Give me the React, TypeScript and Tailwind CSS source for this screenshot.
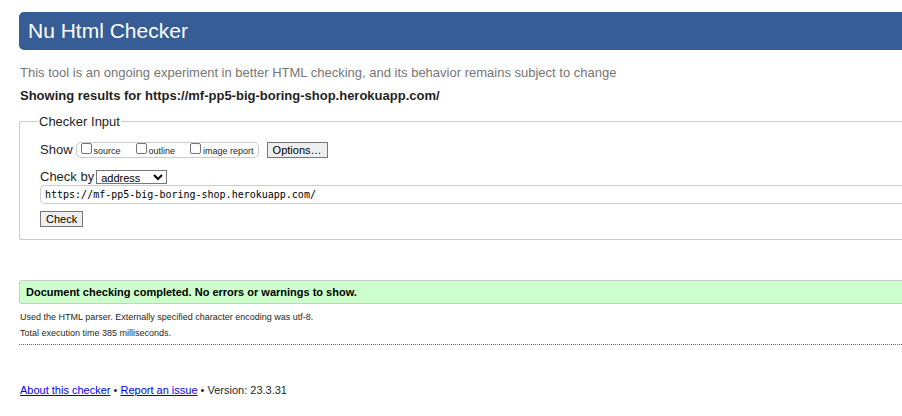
const reports = [
  { id: "source", label: "source", spacing: "mr-[15px]" },
  { id: "outline", label: "outline", spacing: "mr-[15px]" },
  { id: "image-report", label: "image report", spacing: "mr-1" },
];

const buttonStyle =
  "h-4 border border-[#767676] bg-[#efefef] px-[5px] text-[11px] leading-[14px] text-black";

function CheckerForm() {
  return (
    <form onSubmit={(event) => event.preventDefault()}>
      <fieldset className="rounded-l-[3px] border border-r-0 border-[#ccc] pb-3 pl-5">
        <legend className="-ml-0.5 px-px pt-px text-[13px] leading-4">Checker Input</legend>

        <div className="mt-3 flex items-center">
          <span id="show-label" className="mr-[3px] text-[13px] leading-4">
            Show
          </span>
          <div
            role="group"
            aria-labelledby="show-label"
            className="mr-2 flex h-4 items-center rounded-[5px] border border-[#ccc] pl-1"
          >
            {reports.map((report) => (
              <label
                key={report.id}
                htmlFor={report.id}
                className={`flex items-end gap-0.5 text-[9px] leading-3 ${report.spacing}`}
              >
                <input
                  id={report.id}
                  type="checkbox"
                  className="mb-[3px] h-[11px] w-[11px] appearance-none rounded-[2px] border border-[#767676] bg-white checked:bg-[#0075ff]"
                />
                {report.label}
              </label>
            ))}
          </div>
          <button type="button" className={buttonStyle}>
            Options…
          </button>
        </div>

        <div className="mt-[11px] flex items-center gap-0.5">
          <label htmlFor="method" className="text-[13px] leading-4">
            Check by
          </label>
          <select
            id="method"
            className="h-[14px] w-[71px] border border-[#767676] bg-white text-[11px] leading-3 text-black"
          >
            <option>address</option>
            <option>file upload</option>
            <option>text input</option>
          </select>
        </div>

        <input
          type="url"
          aria-label="Address"
          defaultValue="https://mf-pp5-big-boring-shop.herokuapp.com/"
          className="block h-[19px] w-full rounded-l-[5px] border border-r-0 border-[#ccc] pl-1 font-['DejaVu_Sans_Mono',monospace] text-[10px] text-black"
        />
        <button type="submit" className={`mt-[7px] block ${buttonStyle}`}>
          Check
        </button>
      </fieldset>
    </form>
  );
}

export default function App() {
  return (
    <div className="bg-white pt-3 pb-4 pl-[19px] font-['Liberation_Sans',Arial,sans-serif] text-[#1f1f1f]">
      <header className="rounded-l-[5px] bg-[#365d95] px-[9px] py-[5px]">
        <h1 className="text-[21px] leading-7 text-white">Nu Html Checker</h1>
      </header>

      <main>
        <p className="mt-[15px] pl-px text-[13px] leading-4 text-[#767676]">
          This tool is an ongoing experiment in better HTML checking, and its behavior remains
          subject to change
        </p>
        <h2 className="mt-[7px] mb-[9px] pl-px text-[13px] leading-4 font-bold">
          Showing results for https://mf-pp5-big-boring-shop.herokuapp.com/
        </h2>

        <CheckerForm />

        <p className="mt-10 rounded-l-[3px] border border-r-0 border-[#ccc] bg-[#ccffcc] px-[6px] py-[3px] text-[11px] leading-4 font-bold text-black">
          Document checking completed. No errors or warnings to show.
        </p>
        <div className="mt-[5px] border-b border-dotted border-[#666] pb-[3px] text-[9px] leading-4">
          <p className="pl-px">
            Used the HTML parser. Externally specified character encoding was utf-8.
          </p>
          <p className="pl-px">Total execution time 385 milliseconds.</p>
        </div>
      </main>

      <footer className="mt-[37px] pl-px text-[11px] leading-4">
        <a href="#about" className="text-[#0000ee] underline">About this checker</a>
        {" • "}
        <a href="#issue" className="text-[#0000ee] underline">Report an issue</a>
        {" • Version: 23.3.31"}
      </footer>
    </div>
  );
}
